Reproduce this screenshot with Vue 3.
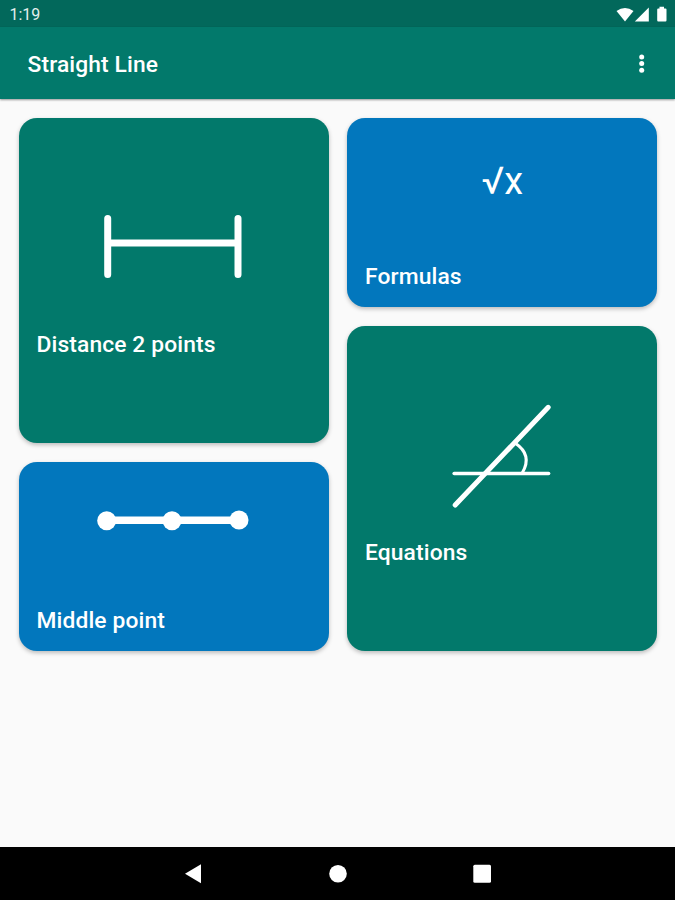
<template>
  <div class="screen">
    <header class="status-bar">
      <span class="clock">1:19</span>
      <svg class="status-icons" width="52" height="18" viewBox="0 0 52 18" fill="#fff">
        <path d="M0.5 5 Q9 -1.2 17.5 5 L9 15.5 Z" />
        <path d="M32.8 1.5 V15.5 H18.8 Z" />
        <path d="M43.5 0.8 H48 V2.5 H49.5 Q50.5 2.5 50.5 3.5 V14.3 Q50.5 15.5 49.5 15.5 H42.2 Q41.2 15.5 41.2 14.3 V3.5 Q41.2 2.5 42.2 2.5 H43.5 Z" />
      </svg>
    </header>

    <div class="app-bar">
      <h1>Straight Line</h1>
      <button class="menu" aria-label="More options">
        <svg width="10" height="22" viewBox="0 0 10 22" fill="#fff">
          <circle cx="4.7" cy="4" r="2.5" />
          <circle cx="4.7" cy="10.6" r="2.5" />
          <circle cx="4.7" cy="17.2" r="2.5" />
        </svg>
      </button>
    </div>

    <main class="board">
      <div v-for="(column, c) in columns" :key="c" class="column">
        <div
            v-for="card in column"
            :key="card.icon"
            :class="['card', card.color, { tall: card.tall }]"
        >
          <svg v-if="card.icon === 'distance'" class="art" viewBox="0 0 310 212">
            <path d="M88.7 100.5 V156.5 M219 100.5 V156.5 M88.7 125 H219" stroke-width="7" />
          </svg>

          <svg v-else-if="card.icon === 'middle'" class="art" viewBox="0 0 310 144">
            <path d="M88 58.3 H220" stroke-width="7.5" />
            <circle cx="87.7" cy="58.8" r="9.5" />
            <circle cx="153" cy="58.8" r="9.5" />
            <circle cx="220" cy="58" r="9.5" />
          </svg>

          <svg v-else-if="card.icon === 'formulas'" class="art" viewBox="0 0 310 144">
            <text x="134.6" y="76.3" font-size="38">√x</text>
          </svg>

          <svg v-else class="art" viewBox="0 0 310 212">
            <path d="M108.2 179 L201.2 81.3" stroke-width="5" />
            <path d="M107.2 147.5 H201.6" stroke-width="3.6" />
            <path d="M168 117 Q186 129 175.2 147" stroke-width="3" />
          </svg>

          <div class="label">{{ card.label }}</div>
        </div>
      </div>
    </main>

    <nav class="nav-bar">
      <svg width="20" height="20" viewBox="0 0 20 20" fill="#fff">
        <path d="M1 9.8 L17 0.3 V19.3 Z" />
      </svg>
      <svg width="20" height="20" viewBox="0 0 20 20" fill="#fff">
        <circle cx="10" cy="9.8" r="8.8" />
      </svg>
      <svg width="20" height="20" viewBox="0 0 20 20" fill="#fff">
        <rect x="1.3" y="0.8" width="17.7" height="18" rx="1.5" />
      </svg>
    </nav>
  </div>
</template>

<script setup>
const columns = [
  [
    { label: 'Distance 2 points', icon: 'distance', color: 'green', tall: true },
    { label: 'Middle point', icon: 'middle', color: 'blue', tall: false }
  ],
  [
    { label: 'Formulas', icon: 'formulas', color: 'blue', tall: false },
    { label: 'Equations', icon: 'equations', color: 'green', tall: true }
  ]
]
</script>

<style>
body {
  margin: 0;
  background: #fafafa;
}
</style>

<style scoped>
.screen {
  display: flex;
  flex-direction: column;
  height: 900px;
  background: #fafafa;
  color: #fff;
  font-family: Roboto, "Liberation Sans", sans-serif;
  overflow: hidden;
}

.status-bar {
  display: flex;
  justify-content: space-between;
  align-items: center;
  box-sizing: border-box;
  height: 27px;
  padding: 2px 7px 0 9.5px;
  background: #02685b;
}

.clock {
  font-size: 16px;
  color: #e3efed;
}

.app-bar {
  display: flex;
  justify-content: space-between;
  align-items: center;
  box-sizing: border-box;
  height: 71.5px;
  padding: 2px 28px 0 27.5px;
  background: #02796b;
  box-shadow: 0 1px 2px rgba(0, 0, 0, 0.4);
}

h1 {
  margin: 0;
  padding-top: 2px;
  font-size: 22.8px;
  font-weight: 500;
  letter-spacing: 0.12px;
}

.menu {
  display: flex;
  padding: 0;
  border: none;
  background: none;
}

.board {
  display: flex;
  flex: 1;
  gap: 18.5px;
  padding: 19.5px 18px 0 18.5px;
}

.column {
  display: flex;
  flex: 1;
  flex-direction: column;
  gap: 19px;
}

.card {
  height: 189px;
  border-radius: 18px;
  box-shadow: 0 2px 4px rgba(0, 0, 0, 0.25);
}

.card.tall {
  height: 325px;
}

.green {
  background: #02796b;
}

.blue {
  background: #0277bd;
}

.art {
  display: block;
  width: 100%;
  height: 144px;
  fill: none;
  stroke: #fff;
  stroke-linecap: round;
}

.tall .art {
  height: 212px;
}

.art circle,
.art text {
  fill: #fff;
  stroke: none;
}

.label {
  padding-left: 18px;
  font-size: 22.8px;
  font-weight: 500;
  line-height: 29px;
  letter-spacing: 0.12px;
}

.nav-bar {
  display: flex;
  justify-content: center;
  align-items: center;
  gap: 124px;
  height: 53px;
  background: #000;
}
</style>
